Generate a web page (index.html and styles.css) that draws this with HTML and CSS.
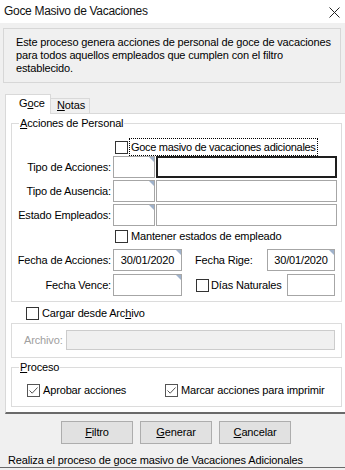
FILE: index.html
```html
<!DOCTYPE html>
<html lang="es">
<head>
<meta charset="utf-8">
<title>Goce Masivo de Vacaciones</title>
<link rel="stylesheet" href="styles.css">
</head>
<body>
<div class="titlebar">
  <span class="title">Goce Masivo de Vacaciones</span>
  <svg class="close" width="11" height="11" viewBox="0 0 11 11"><path d="M0.5 0.5 L10.5 10.5 M10.5 0.5 L0.5 10.5" stroke="#222" stroke-width="1" fill="none"/></svg>
</div>

<div class="info">Este proceso genera acciones de personal de goce de vacaciones<br>para todos aquellos empleados que cumplen con el filtro<br>establecido.</div>

<div class="tabs">
  <div class="tab active">G<u>o</u>ce</div>
  <div class="tab"><u>N</u>otas</div>
</div>

<div class="panel">
  <fieldset class="group acciones">
    <legend><u>A</u>cciones de Personal</legend>
    <div class="acc-body">
      <div class="r-check first">
        <span class="cb"></span><span class="focus-lbl">Goce masivo de vacaciones adicionales</span>
      </div>
      <div class="r-field r2">
        <span class="lbl">Tipo de Acciones:</span>
        <span class="edit sm tri"></span>
        <span class="edit lg focus"></span>
      </div>
      <div class="r-field">
        <span class="lbl">Tipo de Ausencia:</span>
        <span class="edit sm tri"></span>
        <span class="edit lg"></span>
      </div>
      <div class="r-field">
        <span class="lbl">Estado Empleados:</span>
        <span class="edit sm tri"></span>
        <span class="edit lg"></span>
      </div>
      <div class="r-check mantener">
        <span class="cb"></span><span class="cb-text">Mantener estados de empleado</span>
      </div>
      <div class="r-field r6">
        <span class="lbl">Fecha de Acciones:</span>
        <span class="edit date tri">30/01/2020</span>
        <span class="lbl2">Fecha Rige:</span>
        <span class="edit date2 tri">30/01/2020</span>
      </div>
      <div class="r-field r7">
        <span class="lbl">Fecha Vence:</span>
        <span class="edit date tri"></span>
        <span class="dias"><span class="cb"></span><span class="cb-text2">Días Naturales</span></span>
        <span class="edit dn"></span>
      </div>
    </div>
  </fieldset>

  <div class="r-cargar">
    <span class="cb"></span><span class="cb-text">Cargar desde Arc<u>h</u>ivo</span>
  </div>

  <fieldset class="group archivo">
    <div class="arch-body">
      <span class="arch-lbl">Archivo:</span>
      <span class="edit arch-edit"></span>
    </div>
  </fieldset>

  <fieldset class="group proceso">
    <legend><u>P</u>roceso</legend>
    <div class="proc-body">
      <span class="pchk first"><span class="cb checked"><svg width="11" height="11" viewBox="0 0 11 11"><path d="M1.5 5.5 L4.2 8.2 L9.5 2.5" stroke="#555" stroke-width="1" fill="none"/></svg></span><span class="cb-text">Aprobar acciones</span></span>
      <span class="pchk"><span class="cb checked"><svg width="11" height="11" viewBox="0 0 11 11"><path d="M1.5 5.5 L4.2 8.2 L9.5 2.5" stroke="#555" stroke-width="1" fill="none"/></svg></span><span class="cb-text">Marcar acciones para imprimir</span></span>
    </div>
  </fieldset>
</div>

<div class="buttons">
  <span class="btn"><u>F</u>iltro</span>
  <span class="btn"><u>G</u>enerar</span>
  <span class="btn"><u>C</u>ancelar</span>
</div>

<div class="status">Realiza el proceso de goce masivo de Vacaciones Adicionales</div>
</body>
</html>
```

FILE: styles.css
```css
html, body {
  margin: 0;
  padding: 0;
}

body {
  width: 345px;
  height: 470px;
  overflow: hidden;
  background: #f0f0f0;
  font-family: "Liberation Sans", Arial, sans-serif;
  font-size: 11px;
  line-height: 13px;
  letter-spacing: -0.15px;
  color: #000;
}

u {
  text-decoration: underline;
  text-underline-offset: 1px;
}

.titlebar {
  height: 23px;
  background: #fff;
  display: flex;
  justify-content: space-between;
  align-items: flex-start;
  padding: 0 5px 0 4px;
  box-sizing: border-box;
}

.title {
  font-size: 12px;
  line-height: 15px;
  margin-top: 4px;
  letter-spacing: -0.3px;
  color: #111;
}

.close {
  margin-top: 7px;
}

.info {
  margin: 5px 0 0 3px;
  width: 338px;
  height: 55px;
  box-sizing: border-box;
  border: 1px solid #d7d7d7;
  padding: 7px 0 0 12px;
  white-space: nowrap;
}

.tabs {
  display: flex;
  align-items: flex-end;
  margin: 11px 0 0 5px;
  height: 19px;
}

.tab {
  box-sizing: border-box;
  border: 1px solid #d9d9d9;
  border-bottom: none;
  background: #f0f0f0;
  height: 15px;
  width: 40px;
  margin-left: -1px;
  padding-left: 6px;
  white-space: nowrap;
}

.tab.active {
  position: relative;
  z-index: 1;
  background: #fff;
  height: 20px;
  width: 46px;
  margin-left: 0;
  margin-bottom: -1px;
  padding: 2px 0 0 13px;
}

.panel {
  margin-left: 5px;
  width: 340px;
  height: 301px;
  box-sizing: border-box;
  background: #fff;
  border-top: 1px solid #d9d9d9;
  border-left: 1px solid #d9d9d9;
  border-bottom: 2px solid #6a6a6a;
  padding: 3px 0 0 5px;
}

.group {
  margin: 0;
  padding: 0;
  border: 1px solid #dcdcdc;
  width: 331px;
  box-sizing: border-box;
  min-width: 0;
}

.group legend {
  margin-left: 7px;
  padding: 0 1px;
  line-height: 13px;
}

.acc-body {
  padding: 9px 0 5px 0;
}

.r-check {
  display: flex;
  align-items: center;
  padding-left: 103px;
}

.r-check.first {
  height: 16px;
}

.r-check.mantener {
  height: 17px;
  margin-top: 2px;
}

.cb {
  width: 13px;
  height: 13px;
  box-sizing: border-box;
  border: 1px solid #333;
  background: #fff;
  flex: none;
  display: flex;
  align-items: center;
  justify-content: center;
}

.cb.checked {
  border-color: #555;
}

.focus-lbl {
  margin-left: 1px;
  border: 1px dotted #000;
  padding: 1px 1px;
  line-height: 14px;
  letter-spacing: -0.3px;
  white-space: nowrap;
}

.cb-text {
  margin-left: 3px;
  white-space: nowrap;
}

.r-field {
  display: flex;
  height: 22px;
  margin-top: 2px;
}

.r-field.r2 {
  margin-top: 1px;
}

.r-field.r6 {
  margin-top: 4px;
}

.r-field.r7 {
  margin-top: 3px;
}

.lbl {
  width: 100px;
  box-sizing: border-box;
  text-align: right;
  padding-right: 1px;
  margin-right: 1px;
  line-height: 22px;
  white-space: nowrap;
}

.edit {
  box-sizing: border-box;
  height: 22px;
  border: 1px solid #a6a6a6;
  background: #fff;
  position: relative;
  line-height: 20px;
  flex: none;
}

.edit.tri::after {
  content: "";
  position: absolute;
  top: 0;
  right: 0;
  width: 0;
  height: 0;
  border-top: 5px solid #9fb2cb;
  border-left: 5px solid transparent;
}

.edit.sm {
  width: 42px;
}

.edit.lg {
  width: 181px;
  margin-left: 1px;
}

.edit.focus {
  border: 2px solid #1e1e1e;
}

.edit.date {
  width: 69px;
  text-align: center;
}

.edit.date2 {
  width: 68px;
  text-align: center;
}

.lbl2 {
  margin-left: 13px;
  width: 72px;
  line-height: 22px;
  white-space: nowrap;
}

.dias {
  margin-left: 14px;
  width: 91px;
  display: flex;
  align-items: center;
}

.cb-text2 {
  margin-left: 2px;
  white-space: nowrap;
}

.edit.dn {
  width: 48px;
}

.r-cargar {
  display: flex;
  align-items: center;
  height: 15px;
  margin-top: 4px;
  padding-left: 15px;
}

.group.archivo {
  margin-top: 2px;
}

.arch-body {
  display: flex;
  padding: 6px 0 7px 12px;
}

.arch-lbl {
  color: #a0a0a0;
  line-height: 20px;
  margin-right: 3px;
}

.edit.arch-edit {
  width: 269px;
  height: 20px;
  background: #f0f0f0;
  border-color: #cccccc;
}

.group.proceso {
  margin-top: 3px;
}

.proc-body {
  display: flex;
  align-items: center;
  height: 15px;
  padding: 9px 0 8px 15px;
}

.pchk {
  display: flex;
  align-items: center;
}

.pchk.first {
  width: 138px;
}

.buttons {
  display: flex;
  margin-top: 7px;
  padding-left: 61px;
  gap: 7px;
}

.btn {
  box-sizing: border-box;
  width: 72px;
  height: 23px;
  border: 1px solid #adadad;
  background: #e1e1e1;
  text-align: center;
  line-height: 21px;
}

.status {
  margin-top: 10px;
  height: 13px;
  padding-left: 8px;
  border-bottom: 1px solid #6a6a6a;
  white-space: nowrap;
}
```
